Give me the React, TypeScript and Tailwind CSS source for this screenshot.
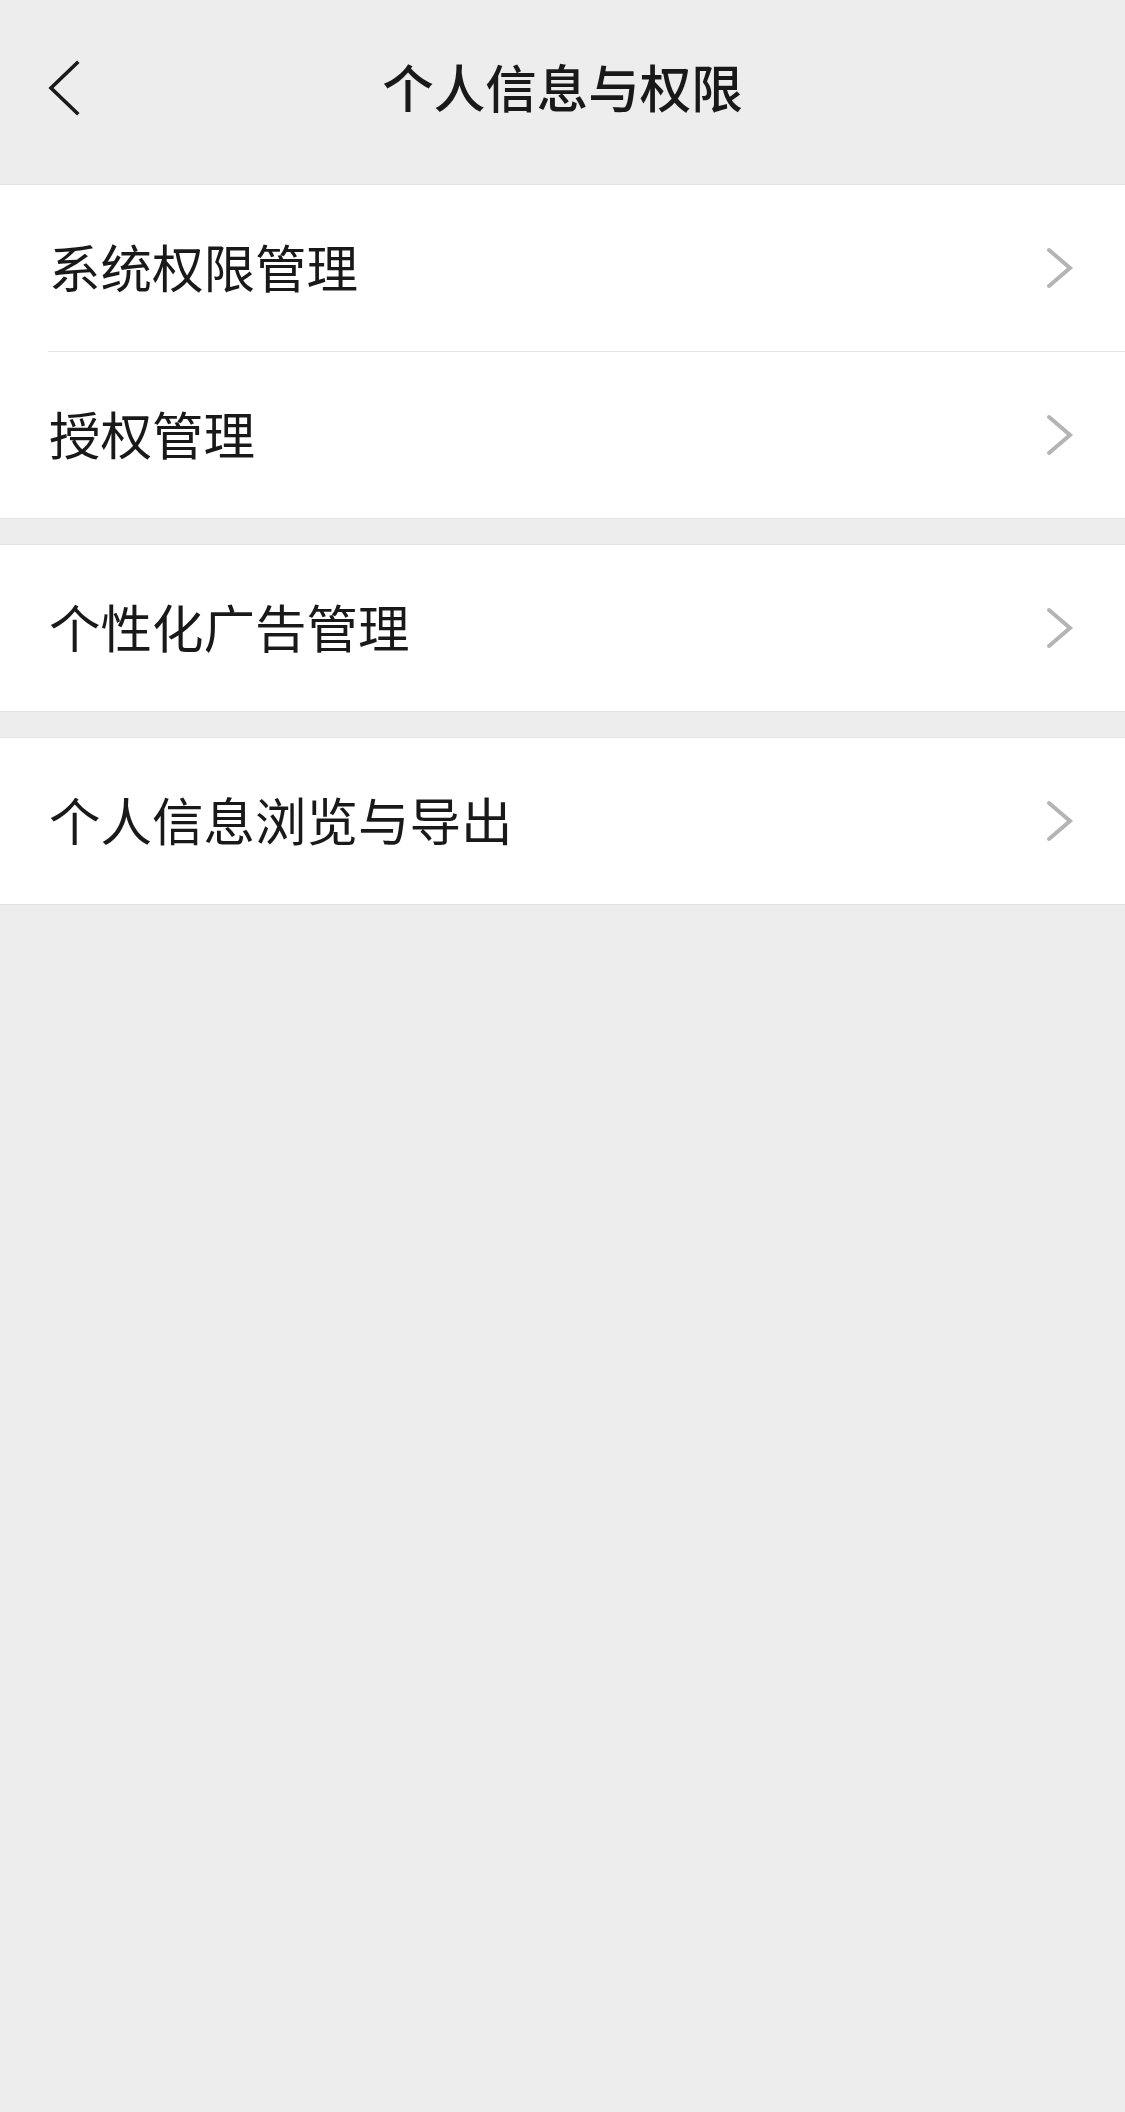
import React from 'react';

const items = [['系统权限管理', '授权管理'], ['个性化广告管理'], ['个人信息浏览与导出']];

function Chevron() {
  return (
    <svg width="30" height="46" viewBox="0 0 30 46" className="shrink-0">
      <polyline points="5,5 26,23 5,41" fill="none" stroke="#b4b4b4" strokeWidth="4" strokeLinecap="round" strokeLinejoin="miter" />
    </svg>
  );
}

function Row({ label, divider }: { label: string; divider: boolean }) {
  return (
    <div className="bg-white">
      <div className="flex h-[166px] items-center justify-between pl-[49px] pr-[51px]">
        <span className="pb-[4px] text-[51.5px] leading-none text-[#191919]">{label}</span>
        <Chevron />
      </div>
      {divider && <div className="ml-[48px] h-px bg-[#e5e5e5]"></div>}
    </div>
  );
}

export default function App() {
  return (
    <div
      className="min-h-[2112px] w-[1125px] bg-[#ededed] pb-10"
      style={{ fontFamily: '"Noto Sans CJK SC", "Noto Sans", sans-serif' }}
    >
      <header className="grid h-[184px] grid-cols-[1fr_auto_1fr] items-center pb-[8px]">
        <div className="pl-[47px]">
          <svg width="34" height="56" viewBox="0 0 34 56">
            <polyline points="30,3 4,28 30,53" fill="none" stroke="#1a1a1a" strokeWidth="3.6" strokeLinecap="square" />
          </svg>
        </div>
        <h1 className="pb-[4px] text-[51.5px] font-medium leading-none text-[#191919]">个人信息与权限</h1>
        <div></div>
      </header>

      <div className="space-y-[25px]">
        {items.map((group, gi) => (
          <div key={gi} className="border-y border-[#e3e3e3]">
            {group.map((label, i) => (
              <Row key={label} label={label} divider={i < group.length - 1} />
            ))}
          </div>
        ))}
      </div>
    </div>
  );
}
